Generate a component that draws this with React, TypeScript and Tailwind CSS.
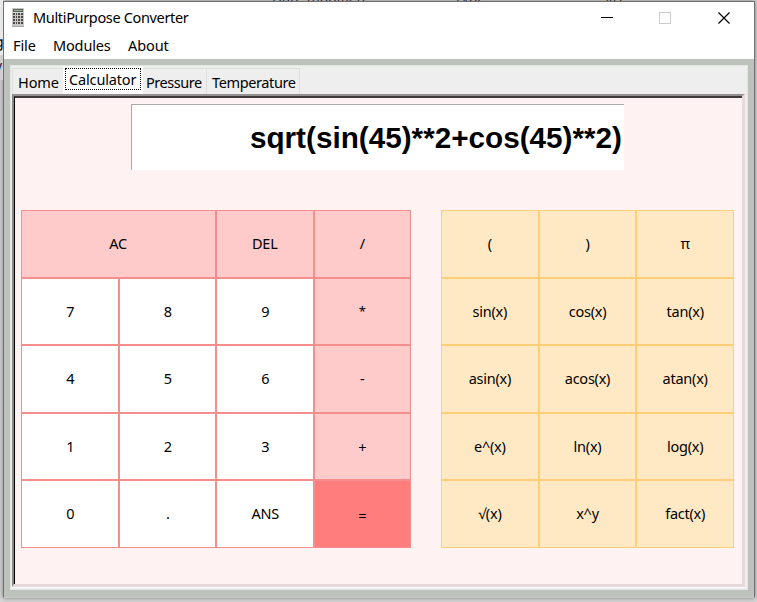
import React from "react";

const operators = ["AC", "DEL", "/", "7", "8", "9", "*", "4", "5", "6", "-", "1", "2", "3", "+", "0", ".", "ANS", "="];
const functions = ["(", ")", "π", "sin(x)", "cos(x)", "tan(x)", "asin(x)", "acos(x)", "atan(x)", "e^(x)", "ln(x)", "log(x)", "√(x)", "x^y", "fact(x)"];

function keyStyle(label: string) {
  if (label === "AC") return "col-span-2 bg-[#ffcaca] pr-px";
  if (label === "=") return "bg-[#ff7d7d] pt-[3px]";
  if (label === "+") return "bg-[#ffcaca] pt-[2px]";
  if (label === "*") return "bg-[#ffcaca] text-[13px]";
  if (["DEL", "/", "-"].includes(label)) return "bg-[#ffcaca]";
  return "bg-white pl-px";
}

function CalculatorIcon() {
  return (
    <svg width="12" height="19" viewBox="0 0 12 19" shapeRendering="crispEdges">
      <rect x="0" y="0" width="12" height="19" fill="#c9c6c6" />
      <rect x="1" y="1" width="10" height="3" fill="#5a6157" />
      <rect x="2" y="2" width="8" height="1" fill="#9db394" />
      <rect x="1" y="4" width="10" height="1" fill="#dddddd" />
      {[5, 8, 11, 14].map((y) =>
        [1, 4, 6, 9].map((x) => <rect key={`${x}-${y}`} x={x} y={y} width={x === 4 ? 1 : 2} height="2" fill="#4c4848" />)
      )}
      <rect x="0" y="18" width="12" height="1" fill="#a8a8a8" />
    </svg>
  );
}

export default function App() {
  return (
    <div className="relative h-[602px] w-[757px] overflow-hidden bg-[#d9d9d9] pl-[3px] pt-px font-['Noto_Sans','Open_Sans',sans-serif] text-black">
      <div className="absolute left-0 top-0 h-[80px] w-[3px] overflow-hidden bg-[#e9e9e9] text-[14px]">
        <div className="mt-[31px] ml-[-5px] underline">g</div>
        <div className="mt-[3px] h-[27px] bg-[#cfcfcf]"><span className="ml-[-5px] text-[#171744]">v</span></div>
      </div>
      <div className="absolute left-[272px] top-0 flex h-px w-[400px] overflow-hidden text-[14px] leading-[1px] text-[#333]">
        <span className="-mt-[3px] w-[182px]">Date modified</span>
        <span className="-mt-[3px] w-[147px]">Type</span>
        <span className="-mt-[3px]">Size</span>
      </div>
      <div className="flex h-[597px] w-[752px] flex-col border border-[#707070] border-b-[#c4c8c3] bg-[#bdc3bc] shadow-[0_0_5px_rgba(0,0,0,0.45)]">
        <header className="h-[57px] bg-white">
          <div className="flex h-[31px] items-center">
            <div className="ml-[8px] w-[21px]"><CalculatorIcon /></div>
            <h1 className="whitespace-nowrap pb-[2px] text-[14.5px] leading-[20px] tracking-[-0.34px]">MultiPurpose Converter</h1>
            <svg className="ml-auto mr-[20px]" width="134" height="14" viewBox="0 0 134 14" fill="none">
              <path d="M1 6.5h12" stroke="#000" />
              <rect x="59.5" y="1.5" width="11" height="11" stroke="#ccc" />
              <path d="M118.5 1.5l11 11m0-11l-11 11" stroke="#000" strokeWidth="1.15" />
            </svg>
          </div>
          <nav className="flex pl-[9px] text-[14.5px] leading-[25px]">
            <span className="w-[40px] tracking-[-0.1px]">File</span>
            <span className="w-[75px] tracking-[-0.15px]">Modules</span>
            <span className="tracking-[-0.1px]">About</span>
          </nav>
        </header>
        <main className="ml-[6px] mr-[6px] mt-[6px] flex h-[525px] flex-col border border-[#e3e6e2] bg-[#eeeeee] pl-px">
          <div className="flex h-[28px] items-end text-[14.5px]">
            <div className="h-[26px] w-[51px] border-l border-t border-[#dedede] pl-[5px] pt-px leading-[24px] tracking-[-0.1px]">Home</div>
            <div className="h-[28px] w-[80px] bg-white px-[2px] pt-[2px]">
              <div className="h-[22px] border border-dotted border-black pl-[3px] leading-[20px] tracking-[-0.15px]">Calculator</div>
            </div>
            <div className="h-[26px] w-[64px] border-r border-t border-[#dedede] pl-[3px] pt-px leading-[24px] tracking-[-0.45px]">Pressure</div>
            <div className="h-[26px] w-[93px] border-r border-t border-[#dedede] pl-[5px] pt-px leading-[24px] tracking-[-0.38px]">Temperature</div>
          </div>
          <div className="mr-px h-[494px] border-b border-r border-b-white border-r-[#eeeeee]">
            <div className="h-[493px] border-2 border-b-[3px] border-r-[3px] border-b-[#e5d9d9] border-l-[#8c8787] border-r-[#e5d9d9] border-t-[#949090]">
              <div className="h-full border-l border-t-2 border-l-black border-t-[#3f3a3a] bg-[#fff2f2]">
                <div className="ml-[116px] mt-[6px] flex h-[66px] w-[493px] items-center justify-end border-l border-t border-[#aaaaaa] bg-white pr-[2px] font-['Liberation_Sans',Arial,sans-serif] text-[29.7px] font-bold">
                  <span className="whitespace-nowrap leading-[34px]">sqrt(sin(45)**2+cos(45)**2)</span>
                </div>
                <div className="ml-[6px] mt-[40px] flex gap-[30px] text-[14.5px] tracking-[-0.25px]">
                  <div className="grid h-[338px] w-[390px] grid-cols-4 grid-rows-5">
                    {operators.map((label) => (
                      <button key={label} className={`flex items-center justify-center border border-[#f78e8e] ${keyStyle(label)}`}>{label}</button>
                    ))}
                  </div>
                  <div className="grid h-[338px] w-[293px] grid-cols-3 grid-rows-5">
                    {functions.map((label) => (
                      <button key={label} className="flex items-center justify-center border border-[#ffce76] bg-[#ffe9c4]">{label}</button>
                    ))}
                  </div>
                </div>
              </div>
            </div>
          </div>
        </main>
      </div>
    </div>
  );
}
